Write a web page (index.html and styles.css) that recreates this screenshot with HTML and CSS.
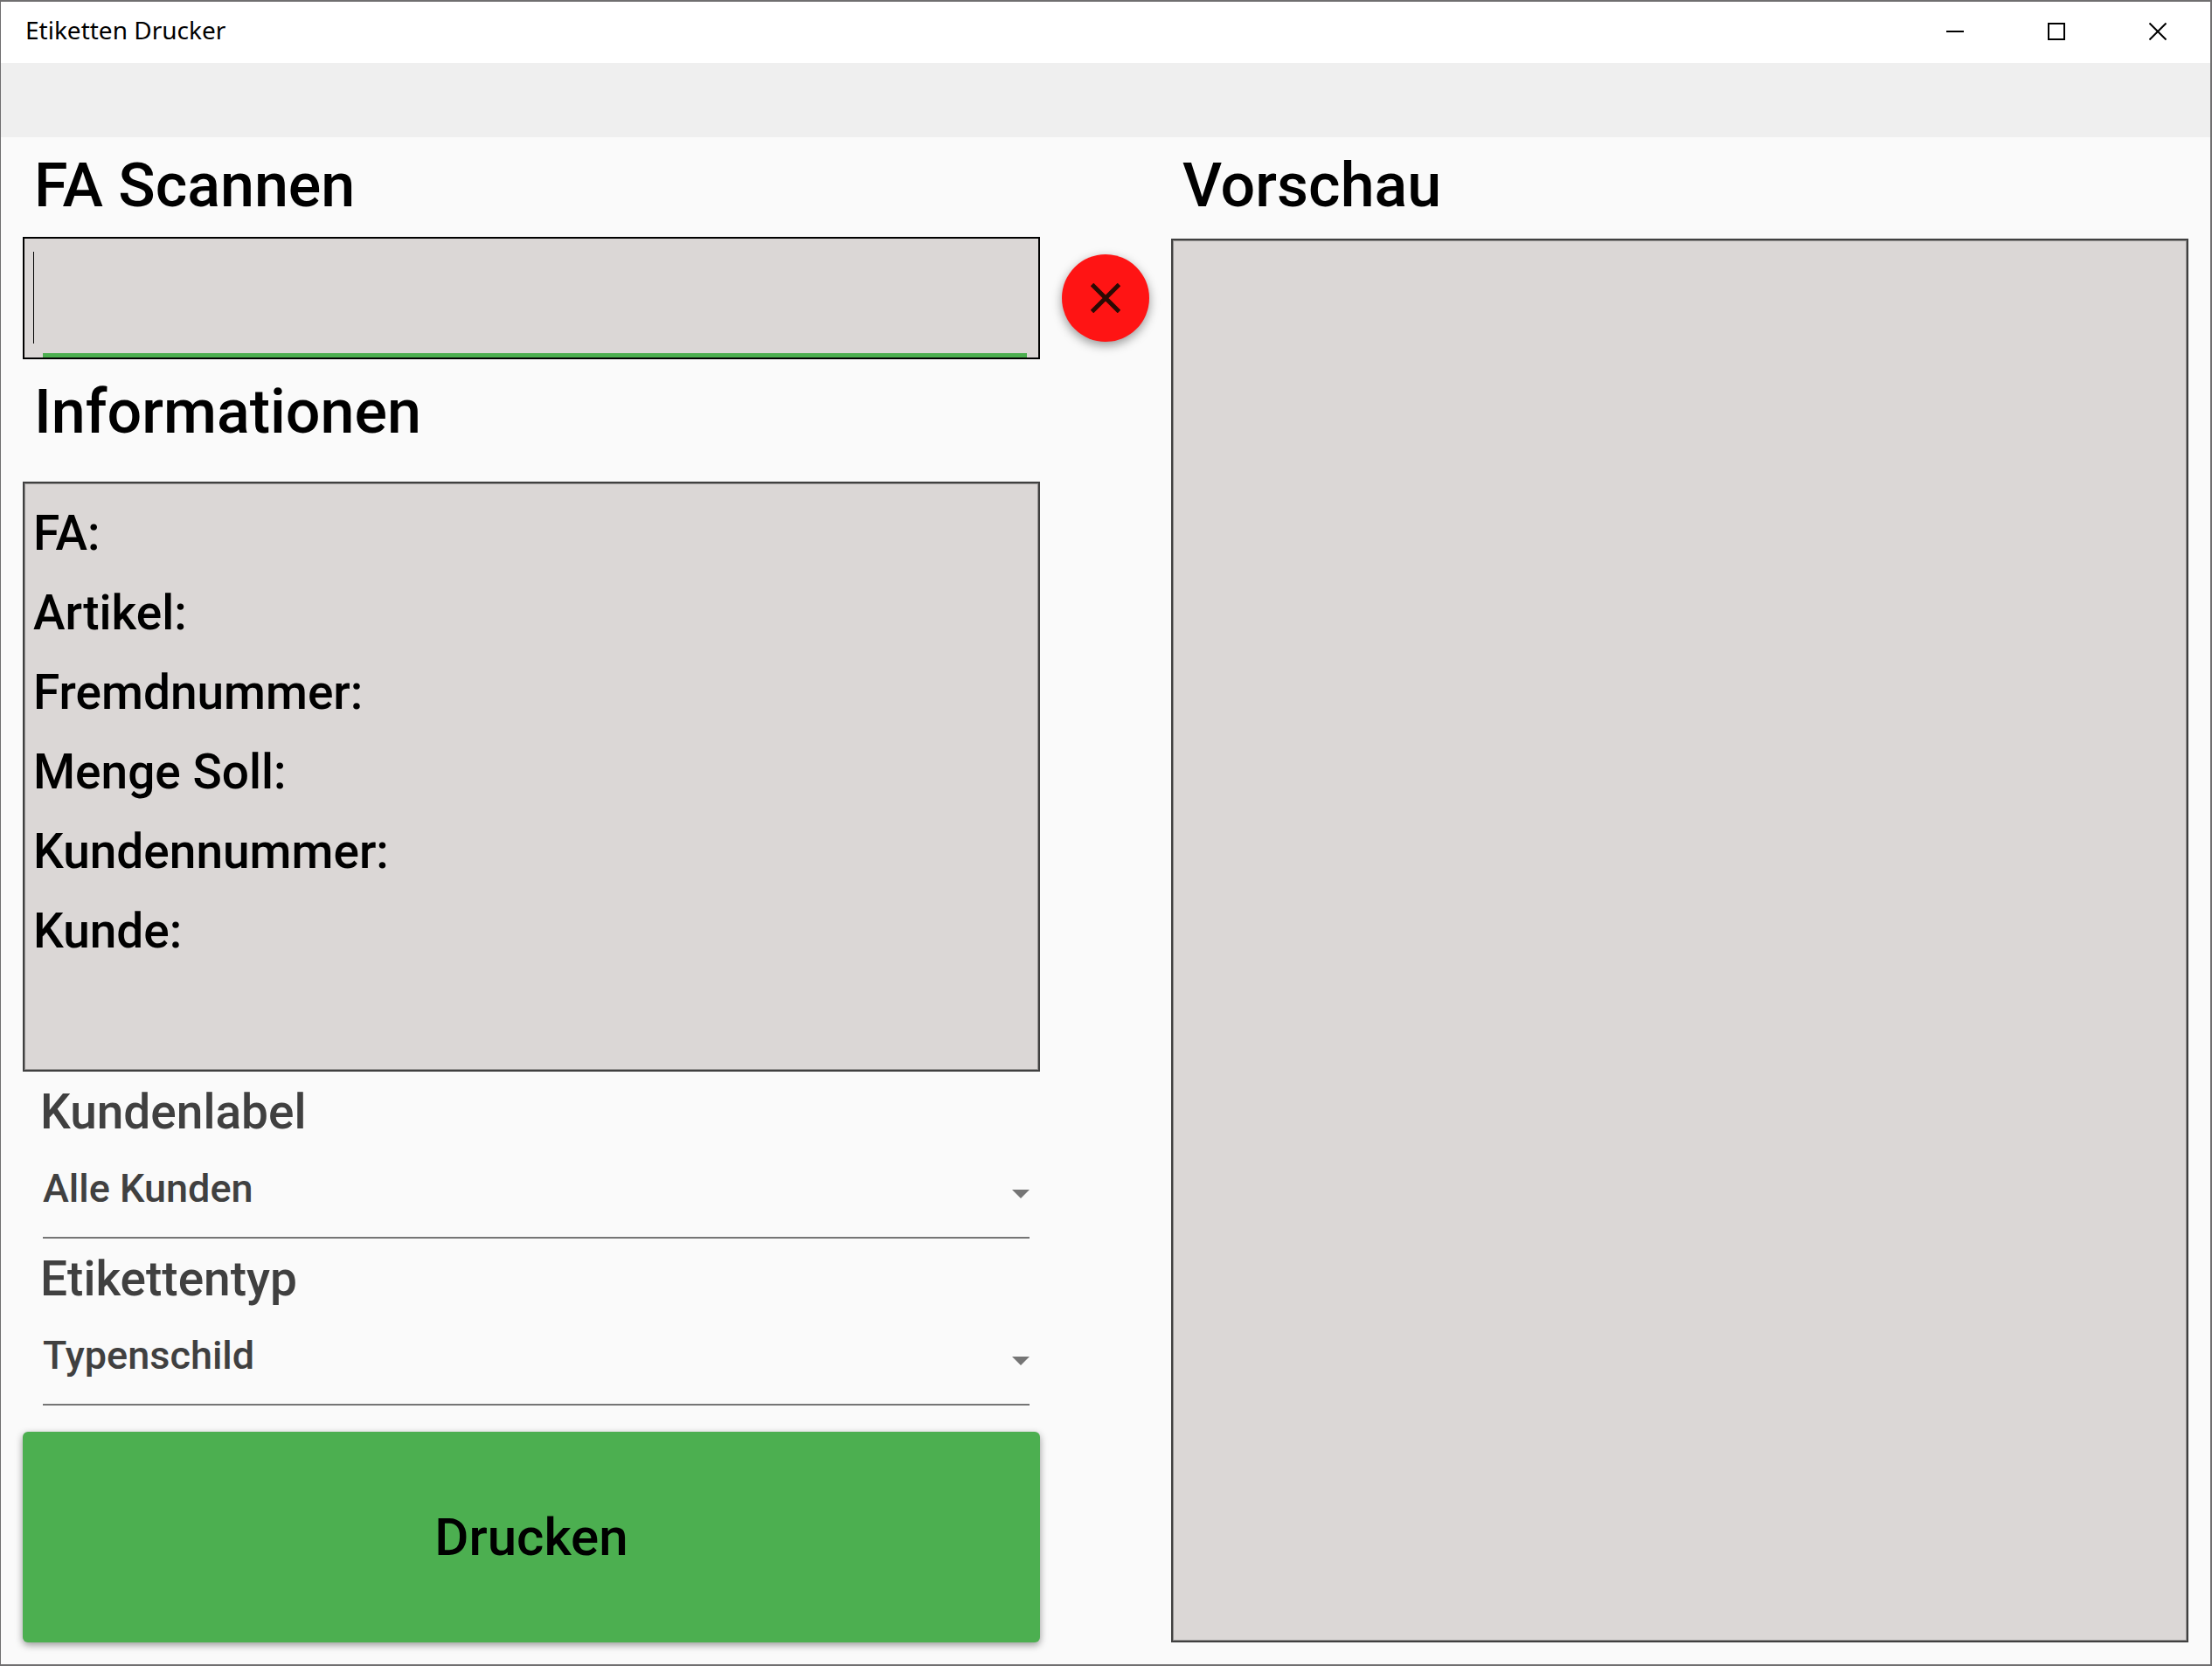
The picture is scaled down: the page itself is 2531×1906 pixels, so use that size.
FILE: index.html
```
<!DOCTYPE html>
<html lang="de">

<head>
    <meta charset="UTF-8">
    <meta name="viewport" content="width=device-width, initial-scale=1.0">
    <title>Etiketten Drucker</title>
    <link rel="stylesheet" href="styles.css">
</head>

<body>
<header class="titlebar">
    <span class="title">Etiketten Drucker</span>
    <div class="window-buttons">
        <button type="button" aria-label="Minimieren">
            <svg width="20" height="20" viewBox="0 0 20 20"><path d="M0 10h20"/></svg>
        </button>
        <button type="button" aria-label="Maximieren">
            <svg width="20" height="20" viewBox="0 0 20 20"><path d="M1 1h18v18H1z"/></svg>
        </button>
        <button type="button" aria-label="Schließen">
            <svg width="20" height="20" viewBox="0 0 20 20"><path d="M0.5 0.5l19 19M19.5 0.5l-19 19"/></svg>
        </button>
    </div>
</header>

<div class="toolbar"></div>

<main>
    <h2 class="scan-title"><label for="scan">FA Scannen</label></h2>
    <input type="text" id="scan" class="scan-input" autocomplete="off">
    <button type="button" class="clear" aria-label="Eingabe löschen">
        <svg width="34" height="34" viewBox="0 0 34 34"><path d="M1.5 1.5l31 31M32.5 1.5l-31 31"/></svg>
    </button>

    <section class="details">
        <h2>Informationen</h2>
        <ul class="info">
            <li>FA:</li>
            <li>Artikel:</li>
            <li>Fremdnummer:</li>
            <li>Menge Soll:</li>
            <li>Kundennummer:</li>
            <li>Kunde:</li>
        </ul>

        <div class="field">
            <label for="kundenlabel">Kundenlabel</label>
            <select id="kundenlabel">
                <option>Alle Kunden</option>
            </select>
        </div>
        <div class="field">
            <label for="etikettentyp">Etikettentyp</label>
            <select id="etikettentyp">
                <option>Typenschild</option>
            </select>
        </div>

        <button type="button" class="print">Drucken</button>
    </section>

    <section class="preview">
        <h2>Vorschau</h2>
        <div class="preview-box"></div>
    </section>
</main>
</body>
</html>
```
FILE: styles.css
```
* {
    box-sizing: border-box;
}

body {
    margin: 0;
    min-height: 100vh;
    display: flex;
    flex-direction: column;
    border: 2px solid #706f70;
    border-left-width: 1px;
    background-color: #fafafa;
    color: black;
    font-family: Roboto, sans-serif;
    font-weight: 500;
}

button, input, select {
    margin: 0;
    border: none;
    border-radius: 0;
    font: inherit;
    color: inherit;
}

button {
    padding: 0;
    cursor: pointer;
}

/* Title bar */
.titlebar {
    display: flex;
    justify-content: space-between;
    height: 70px;
    padding-right: 2px;
    padding-bottom: 2px;
    background-color: white;
}

.title {
    padding-left: 28px;
    font-family: "Noto Sans", sans-serif;
    font-size: 28px;
    font-weight: 400;
    line-height: 64px;
}

.window-buttons {
    display: flex;
}

.window-buttons button {
    display: flex;
    align-items: center;
    justify-content: center;
    width: 116px;
    background-color: transparent;
}

.window-buttons path {
    fill: none;
    stroke: black;
    stroke-width: 2;
}

.toolbar {
    height: 85px;
    background-color: #efefef;
}

/* Content */
main {
    flex: 1;
    display: grid;
    grid-template-columns: 1fr 150px 1fr;
    grid-template-rows: auto auto 1fr;
    padding: 0 25px 25px;
}

h2 {
    margin: 0;
    padding: 14px 13px 18px;
    font-size: 70px;
    font-weight: 500;
    line-height: 82px;
}

.scan-input {
    grid-column: 1;
    grid-row: 2;
    width: 100%;
    height: 140px;
    padding: 0 10px;
    border: 2px solid black;
    outline: none;
    font-size: 70px;
    caret-color: transparent;
    /* caret and green focus line */
    background-color: #dbd7d6;
    background-image: linear-gradient(black, black), linear-gradient(#4caf50, #4caf50);
    background-position: 10px 15px, 21px 100%;
    background-size: 1px 105px, calc(100% - 34px) 5px;
    background-repeat: no-repeat;
}

.clear {
    grid-column: 2;
    grid-row: 2;
    place-self: center;
    display: flex;
    align-items: center;
    justify-content: center;
    width: 100px;
    height: 100px;
    border-radius: 50%;
    background-color: #ff1414;
    box-shadow: 0 4px 12px rgba(0, 0, 0, 0.4);
}

.clear path {
    fill: none;
    stroke: #2b0a03;
    stroke-width: 5;
}

.details {
    grid-column: 1;
    grid-row: 3;
    display: flex;
    flex-direction: column;
}

.details h2 {
    padding-top: 19px;
    padding-bottom: 39px;
}

.info, .preview-box {
    flex: 1;
    border: 2px solid #404040;
    background-color: #dbd7d6;
    box-shadow: inset 0 0 0 1px #959392;
}

.info {
    margin: 0;
    padding: 12px 10px 10px;
    list-style: none;
    font-size: 55px;
    line-height: 91px;
}

.field {
    display: flex;
    flex-direction: column;
    padding: 13px 12px 0 20px;
    color: #404040;
}

.field label {
    font-size: 55px;
    line-height: 66px;
}

.field select {
    height: 112px;
    margin-left: 3px;
    padding: 0 40px 2px 0;
    border-bottom: 2px solid #757575;
    appearance: none;
    font-size: 45px;
    background: url("data:image/svg+xml,%3Csvg xmlns='http://www.w3.org/2000/svg' width='20' height='10'%3E%3Cpath d='M0 0h20L10 10z' fill='%23757575'/%3E%3C/svg%3E") no-repeat right 56px;
}

.print {
    height: 241px;
    margin-top: 30px;
    border-radius: 6px;
    background-color: #4caf50;
    box-shadow: 0 3px 8px rgba(0, 0, 0, 0.4);
    font-size: 60px;
}

/* Preview */
.preview {
    grid-column: 3;
    grid-row: 1 / span 3;
    display: flex;
    flex-direction: column;
}

.preview h2 {
    padding-bottom: 20px;
}
```
